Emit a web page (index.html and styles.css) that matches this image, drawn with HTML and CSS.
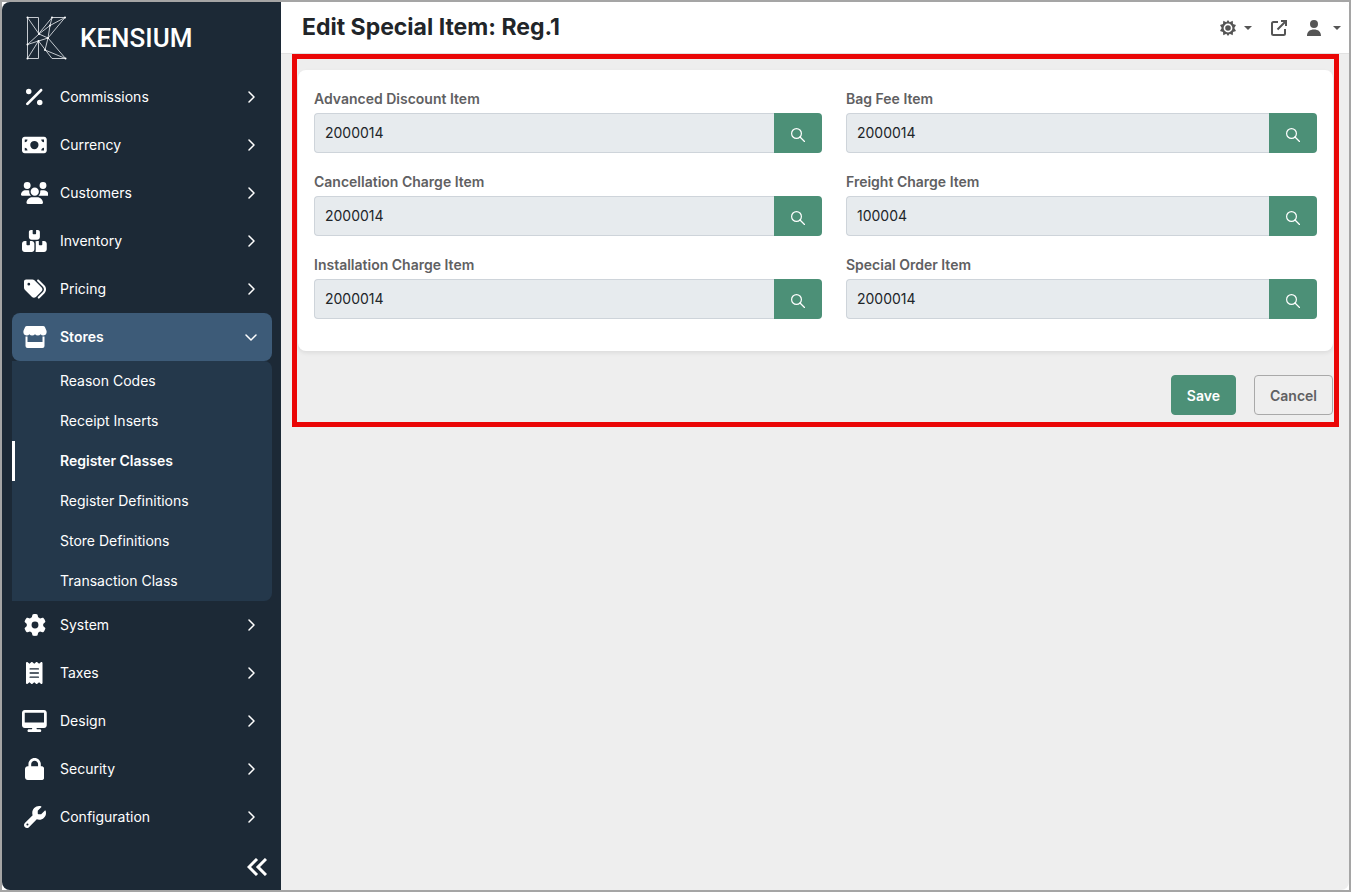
FILE: index.html
```html
<!DOCTYPE html>
<html lang="en">

<head>
  <meta charset="UTF-8">
  <meta name="viewport" content="width=device-width, initial-scale=1.0">
  <title>Edit Special Item</title>
  <link rel="stylesheet" href="styles.css">
</head>

<body>
  <div class="app">
    <aside class="sidebar">
      <a class="logo" href="#">
        <svg class="logo-mark" viewBox="26 16 41 44" aria-hidden="true">
          <path d="M27.5 17.5H38.5V34L52 17.5H65L48 38L65.5 58.5H52L38.5 41V58.5H27.5ZM27.5 17.5L39 34L48 38L27.5 44.5L39 34M52 17.5L50 25.5L65 17.5M50 25.5L39 34M50 25.5L48 38L45 50L65.5 58.5M38.5 41L27.5 58.5" />
          <g class="dots">
            <circle cx="27.5" cy="17.5" r="1" /><circle cx="52" cy="17.5" r="1" /><circle cx="65" cy="17.5" r="1" />
            <circle cx="50" cy="25.5" r="1" /><circle cx="39" cy="34" r="1" /><circle cx="48" cy="38" r="1" />
            <circle cx="38.5" cy="41" r="1" /><circle cx="27.5" cy="44.5" r="1" /><circle cx="45" cy="50" r="1" />
            <circle cx="27.5" cy="58.5" r="1" /><circle cx="65.5" cy="58.5" r="1" />
          </g>
        </svg>
        <span class="logo-text">KENSIUM</span>
      </a>

      <nav class="menu">
        <a class="menu-item" href="#">
          <span class="menu-icon"><svg viewBox="0 0 384 512"><path d="M374.6 118.6c12.5-12.5 12.5-32.8 0-45.3s-32.8-12.5-45.3 0l-320 320c-12.5 12.5-12.5 32.8 0 45.3s32.8 12.5 45.3 0l320-320zM128 128A64 64 0 1 0 0 128a64 64 0 1 0 128 0zM384 384a64 64 0 1 0 -128 0 64 64 0 1 0 128 0z" /></svg></span>
          <span>Commissions</span>
          <svg class="arrow" viewBox="0 0 12 12"><path d="M4 1l5 5-5 5" /></svg>
        </a>
        <a class="menu-item" href="#">
          <span class="menu-icon"><svg viewBox="0 0 576 512"><path d="M64 64C28.7 64 0 92.7 0 128V384c0 35.3 28.7 64 64 64H512c35.3 0 64-28.7 64-64V128c0-35.3-28.7-64-64-64H64zm64 320H64V320c35.3 0 64 28.7 64 64zM64 192V128h64c0 35.3-28.7 64-64 64zM448 384c0-35.3 28.7-64 64-64v64H448zm64-192c-35.3 0-64-28.7-64-64h64v64zM288 160a96 96 0 1 1 0 192 96 96 0 1 1 0-192z" /></svg></span>
          <span>Currency</span>
          <svg class="arrow" viewBox="0 0 12 12"><path d="M4 1l5 5-5 5" /></svg>
        </a>
        <a class="menu-item" href="#">
          <span class="menu-icon"><svg viewBox="0 0 640 512"><path d="M144 0a80 80 0 1 1 0 160A80 80 0 1 1 144 0zM512 0a80 80 0 1 1 0 160A80 80 0 1 1 512 0zM0 298.7C0 239.8 47.8 192 106.7 192h42.7c15.9 0 31 3.5 44.6 9.7c-1.3 7.2-1.9 14.7-1.9 22.3c0 38.2 16.8 72.5 43.3 96c-.2 0-.4 0-.7 0H21.3C9.6 320 0 310.4 0 298.7zM405.3 320c-.2 0-.4 0-.7 0c26.6-23.5 43.3-57.8 43.3-96c0-7.6-.7-15-1.9-22.3c13.6-6.3 28.7-9.7 44.6-9.7h42.7C592.2 192 640 239.8 640 298.7c0 11.8-9.6 21.3-21.3 21.3H405.3zM224 224a96 96 0 1 1 192 0 96 96 0 1 1 -192 0zM128 485.3C128 411.7 187.7 352 261.3 352H378.7C452.3 352 512 411.7 512 485.3c0 14.7-11.9 26.7-26.7 26.7H154.7c-14.7 0-26.7-11.9-26.7-26.7z" /></svg></span>
          <span>Customers</span>
          <svg class="arrow" viewBox="0 0 12 12"><path d="M4 1l5 5-5 5" /></svg>
        </a>
        <a class="menu-item" href="#">
          <span class="menu-icon"><svg viewBox="0 0 576 512"><path d="M248 0H208C181 0 160 21 160 48V160c0 35 29 64 64 64H352c35 0 64-29 64-64V48C416 21 395 0 368 0H328V80c0 9-7 16-16 16H264c-9 0-16-7-16-16V0zM64 256c-35 0-64 29-64 64V448c0 35 29 64 64 64H224c35 0 64-29 64-64V320c0-35-29-64-64-64H184v80c0 9-7 16-16 16H120c-9 0-16-7-16-16V256H64zM352 512H512c35 0 64-29 64-64V320c0-35-29-64-64-64H472v80c0 9-7 16-16 16H408c-9 0-16-7-16-16V256H352c-15 0-29 5-40 14c5 10 8 22 8 34V464c0 12-3 24-8 34C323 507 337 512 352 512z" /></svg></span>
          <span>Inventory</span>
          <svg class="arrow" viewBox="0 0 12 12"><path d="M4 1l5 5-5 5" /></svg>
        </a>
        <a class="menu-item" href="#">
          <span class="menu-icon"><svg viewBox="0 0 512 512"><path d="M345 39.1L472.8 168.4c52.4 53 52.4 138.2 0 191.2L360.8 472.9c-9.3 9.4-24.5 9.5-33.9 .2s-9.5-24.5-.2-33.9L438.6 325.9c33.9-34.3 33.9-89.4 0-123.7L310.9 72.9c-9.3-9.4-9.2-24.6 .2-33.9s24.6-9.2 33.9 .2zM0 229.5V80C0 53.5 21.5 32 48 32H197.5c17 0 33.3 6.7 45.3 18.7l168 168c25 25 25 65.5 0 90.5L277.3 442.7c-25 25-65.5 25-90.5 0l-168-168C6.7 262.7 0 246.5 0 229.5zM144 144a32 32 0 1 0 -64 0 32 32 0 1 0 64 0z" /></svg></span>
          <span>Pricing</span>
          <svg class="arrow" viewBox="0 0 12 12"><path d="M4 1l5 5-5 5" /></svg>
        </a>
        <a class="menu-item active" href="#">
          <span class="menu-icon"><svg viewBox="0 0 24 22"><path d="M4 0H20Q21.5 0 22 1.2L23.6 5Q24 9 20.5 9.5Q18.5 9.6 17.7 8.3Q16.5 9.5 14.9 9.5Q13.2 9.5 12 8.3Q10.8 9.5 9.1 9.5Q7.5 9.5 6.3 8.3Q5.5 9.6 3.5 9.5Q0 9 .4 5L2 1.2Q2.5 0 4 0ZM2.5 10.5H4.5V16H19.5V10.5H21.5V20Q21.5 22 19.5 22H4.5Q2.5 22 2.5 20Z" /></svg></span>
          <span>Stores</span>
          <svg class="arrow" viewBox="0 0 12 12"><path d="M1 4l5 5 5-5" /></svg>
        </a>
        <div class="submenu">
          <a href="#">Reason Codes</a>
          <a href="#">Receipt Inserts</a>
          <a class="current" href="#">Register Classes</a>
          <a href="#">Register Definitions</a>
          <a href="#">Store Definitions</a>
          <a href="#">Transaction Class</a>
        </div>
        <a class="menu-item" href="#">
          <span class="menu-icon"><svg viewBox="0 0 512 512"><path d="M495.9 166.6c3.2 8.7 .5 18.4-6.4 24.6l-43.3 39.4c1.1 8.3 1.7 16.8 1.7 25.4s-.6 17.1-1.7 25.4l43.3 39.4c6.9 6.2 9.6 15.9 6.4 24.6c-4.4 11.9-9.7 23.3-15.8 34.3l-4.7 8.1c-6.6 11-14 21.4-22.1 31.2c-5.9 7.2-15.7 9.6-24.5 6.8l-55.7-17.7c-13.4 10.3-28.2 18.9-44 25.4l-12.5 57.1c-2 9.1-9 16.3-18.2 17.8c-13.8 2.3-28 3.5-42.5 3.5s-28.7-1.2-42.5-3.5c-9.2-1.5-16.2-8.7-18.2-17.8l-12.5-57.1c-15.8-6.5-30.6-15.1-44-25.4L83.1 425.9c-8.8 2.8-18.6 .3-24.5-6.8c-8.1-9.8-15.5-20.2-22.1-31.2l-4.7-8.1c-6.1-11-11.4-22.4-15.8-34.3c-3.2-8.7-.5-18.4 6.4-24.6l43.3-39.4C64.6 273.1 64 264.6 64 256s.6-17.1 1.7-25.4L22.4 191.2c-6.9-6.2-9.6-15.9-6.4-24.6c4.4-11.9 9.7-23.3 15.8-34.3l4.7-8.1c6.6-11 14-21.4 22.1-31.2c5.9-7.2 15.7-9.6 24.5-6.8l55.7 17.7c13.4-10.3 28.2-18.9 44-25.4l12.5-57.1c2-9.1 9-16.3 18.2-17.8C227.3 1.2 241.5 0 256 0s28.7 1.2 42.5 3.5c9.2 1.5 16.2 8.7 18.2 17.8l12.5 57.1c15.8 6.5 30.6 15.1 44 25.4l55.7-17.7c8.8-2.8 18.6-.3 24.5 6.8c8.1 9.8 15.5 20.2 22.1 31.2l4.7 8.1c6.1 11 11.4 22.4 15.8 34.3zM256 336a80 80 0 1 0 0-160 80 80 0 1 0 0 160z" /></svg></span>
          <span>System</span>
          <svg class="arrow" viewBox="0 0 12 12"><path d="M4 1l5 5-5 5" /></svg>
        </a>
        <a class="menu-item" href="#">
          <span class="menu-icon"><svg viewBox="0 0 384 512"><path d="M14 2.2C22.5-1.7 32.5-.3 39.6 5.8L80 40.4 120.4 5.8c9-7.7 22.3-7.7 31.2 0L192 40.4 232.4 5.8c9-7.7 22.3-7.7 31.2 0L304 40.4 344.4 5.8c7.1-6.1 17.1-7.5 25.6-3.6s14 12.4 14 21.8V488c0 9.4-5.5 17.9-14 21.8s-18.5 2.5-25.6-3.6L304 471.6l-40.4 34.6c-9 7.7-22.3 7.7-31.2 0L192 471.6l-40.4 34.6c-9 7.7-22.3 7.7-31.2 0L80 471.6 39.6 506.2c-7.1 6.1-17.1 7.5-25.6 3.6S0 497.4 0 488V24C0 14.6 5.5 6.1 14 2.2zM96 144c-8.8 0-16 7.2-16 16s7.2 16 16 16H288c8.8 0 16-7.2 16-16s-7.2-16-16-16H96zM80 352c0 8.8 7.2 16 16 16H288c8.8 0 16-7.2 16-16s-7.2-16-16-16H96c-8.8 0-16 7.2-16 16zM96 240c-8.8 0-16 7.2-16 16s7.2 16 16 16H288c8.8 0 16-7.2 16-16s-7.2-16-16-16H96z" /></svg></span>
          <span>Taxes</span>
          <svg class="arrow" viewBox="0 0 12 12"><path d="M4 1l5 5-5 5" /></svg>
        </a>
        <a class="menu-item" href="#">
          <span class="menu-icon"><svg viewBox="0 0 576 512"><path d="M64 0C28.7 0 0 28.7 0 64V352c0 35.3 28.7 64 64 64H240l-10.7 32H160c-17.7 0-32 14.3-32 32s14.3 32 32 32H416c17.7 0 32-14.3 32-32s-14.3-32-32-32H346.7L336 416H512c35.3 0 64-28.7 64-64V64c0-35.3-28.7-64-64-64H64zM512 64V288H64V64H512z" /></svg></span>
          <span>Design</span>
          <svg class="arrow" viewBox="0 0 12 12"><path d="M4 1l5 5-5 5" /></svg>
        </a>
        <a class="menu-item" href="#">
          <span class="menu-icon"><svg viewBox="0 0 448 512"><path d="M144 144v48H304V144c0-44.2-35.8-80-80-80s-80 35.8-80 80zM80 192V144C80 64.5 144.5 0 224 0s144 64.5 144 144v48h16c35.3 0 64 28.7 64 64V448c0 35.3-28.7 64-64 64H64c-35.3 0-64-28.7-64-64V256c0-35.3 28.7-64 64-64H80z" /></svg></span>
          <span>Security</span>
          <svg class="arrow" viewBox="0 0 12 12"><path d="M4 1l5 5-5 5" /></svg>
        </a>
        <a class="menu-item" href="#">
          <span class="menu-icon"><svg viewBox="0 0 512 512"><path d="M352 320c88.4 0 160-71.6 160-160c0-15.3-2.2-30.1-6.2-44.2c-3.1-10.8-16.4-13.2-24.3-5.3l-76.8 76.8c-3 3-7.1 4.7-11.3 4.7H336c-8.8 0-16-7.2-16-16V118.6c0-4.2 1.7-8.3 4.7-11.3l76.8-76.8c7.9-7.9 5.4-21.2-5.3-24.3C382.1 2.2 367.3 0 352 0C263.6 0 192 71.6 192 160c0 19.1 3.4 37.5 9.5 54.5L19.9 396.1C7.2 408.8 0 426.1 0 444.1C0 481.6 30.4 512 67.9 512c18 0 35.3-7.2 48-19.9L297.5 310.5c17 6.2 35.4 9.5 54.5 9.5zM80 408a24 24 0 1 1 0 48 24 24 0 1 1 0-48z" /></svg></span>
          <span>Configuration</span>
          <svg class="arrow" viewBox="0 0 12 12"><path d="M4 1l5 5-5 5" /></svg>
        </a>
      </nav>

      <button class="collapse" type="button" aria-label="Collapse menu">
        <svg viewBox="0 0 20 18"><path d="M10 1L2 9l8 8M19 1l-8 8 8 8" /></svg>
      </button>
    </aside>

    <main class="content">
      <header class="topbar">
        <h1>Edit Special Item: Reg.1</h1>
        <div class="tools">
          <button class="tool" type="button" aria-label="Theme">
            <svg class="tool-icon" viewBox="0 0 16 16"><path fill-rule="evenodd" d="M8 0L9.7 2.2L12.7 .8L13 4L16 5L14.3 8L16 11L13 12L12.7 15.200L9.7 13.800L8 16L6.300 13.800L3.300 15.200L3 12L0 11L1.700 8L0 5L3 4L3.300 .8L6.300 2.200ZM8 3.600A4.400 4.400 0 1 0 8 12.400A4.400 4.400 0 1 0 8 3.600ZM8 5.200A2.800 2.800 0 1 1 8 10.800A2.800 2.800 0 1 1 8 5.200Z" /></svg>
            <svg class="caret" viewBox="0 0 8 4"><path d="M0 0h8L4 4z" /></svg>
          </button>
          <a class="tool" href="#" aria-label="Open in new window">
            <svg class="tool-icon open" viewBox="0 0 16 16"><path d="M7 2H2.500Q1 2 1 3.500V13.500Q1 15 2.500 15H12.500Q14 15 14 13.500V9M10 1H15V6M15 1L6.500 9.500" /></svg>
          </a>
          <button class="tool account" type="button" aria-label="Account">
            <svg class="tool-icon" viewBox="0 0 16 16"><path d="M8 0a4 4 0 1 1 0 8a4 4 0 1 1 0-8zM1 16C1 11.500 4 9.500 8 9.500S15 11.500 15 16Z" /></svg>
            <svg class="caret" viewBox="0 0 8 4"><path d="M0 0h8L4 4z" /></svg>
          </button>
        </div>
      </header>

      <form class="edit-form">
        <div class="card">
          <div class="field">
            <label for="discount">Advanced Discount Item</label>
            <div class="input-group">
              <input type="text" id="discount" value="2000014" readonly>
              <button type="button" aria-label="Search"><svg viewBox="0 0 14 14"><circle cx="5.5" cy="5.5" r="4.9" /><path d="M9 9l4.5 4.5" /></svg></button>
            </div>
          </div>
          <div class="field">
            <label for="bag">Bag Fee Item</label>
            <div class="input-group">
              <input type="text" id="bag" value="2000014" readonly>
              <button type="button" aria-label="Search"><svg viewBox="0 0 14 14"><circle cx="5.5" cy="5.5" r="4.9" /><path d="M9 9l4.5 4.5" /></svg></button>
            </div>
          </div>
          <div class="field">
            <label for="cancellation">Cancellation Charge Item</label>
            <div class="input-group">
              <input type="text" id="cancellation" value="2000014" readonly>
              <button type="button" aria-label="Search"><svg viewBox="0 0 14 14"><circle cx="5.5" cy="5.5" r="4.9" /><path d="M9 9l4.5 4.5" /></svg></button>
            </div>
          </div>
          <div class="field">
            <label for="freight">Freight Charge Item</label>
            <div class="input-group">
              <input type="text" id="freight" value="100004" readonly>
              <button type="button" aria-label="Search"><svg viewBox="0 0 14 14"><circle cx="5.5" cy="5.5" r="4.9" /><path d="M9 9l4.5 4.5" /></svg></button>
            </div>
          </div>
          <div class="field">
            <label for="installation">Installation Charge Item</label>
            <div class="input-group">
              <input type="text" id="installation" value="2000014" readonly>
              <button type="button" aria-label="Search"><svg viewBox="0 0 14 14"><circle cx="5.5" cy="5.5" r="4.9" /><path d="M9 9l4.5 4.5" /></svg></button>
            </div>
          </div>
          <div class="field">
            <label for="order">Special Order Item</label>
            <div class="input-group">
              <input type="text" id="order" value="2000014" readonly>
              <button type="button" aria-label="Search"><svg viewBox="0 0 14 14"><circle cx="5.5" cy="5.5" r="4.9" /><path d="M9 9l4.5 4.5" /></svg></button>
            </div>
          </div>
        </div>
        <div class="actions">
          <button class="btn save" type="submit">Save</button>
          <button class="btn cancel" type="button">Cancel</button>
        </div>
      </form>
    </main>
  </div>
</body>

</html>
```
FILE: styles.css
```css
* {
  box-sizing: border-box;
}

body {
  margin: 0;
  font-family: Inter, sans-serif;
  font-size: 14px;
  line-height: 20px;
  color: #212529;
  background-color: white;
  border: 2px solid #a5a5a5;
}

button,
input {
  font-family: inherit;
  font-size: 14px;
}

a {
  color: inherit;
  text-decoration: none;
}

.app {
  display: flex;
  min-height: calc(100vh - 4px);
  border-radius: 8px;
  overflow: hidden;
  background-color: #eee;
}

/* Sidebar */
.sidebar {
  display: flex;
  flex-direction: column;
  flex: 0 0 279px;
  padding: 0 9px 12px 10px;
  background-color: #1c2936;
  color: white;
}

.logo {
  display: flex;
  align-items: center;
  gap: 13px;
  height: 71px;
  padding: 0 0 0 14px;
}

.logo-mark {
  width: 41px;
  height: 44px;
  fill: none;
  stroke: #c5cad0;
  stroke-width: 1;
}

.logo-mark .dots {
  fill: white;
  stroke: none;
}

.logo-text {
  font-family: Roboto, sans-serif;
  font-size: 26px;
  line-height: 32px;
  font-weight: 500;
}

.menu-item {
  display: flex;
  align-items: center;
  height: 48px;
  padding: 0 15px 0 8px;
  border-radius: 8px;
}

.menu-item.active {
  background-color: #3d5b78;
  font-weight: 600;
}

.menu-icon {
  display: flex;
  justify-content: center;
  width: 29px;
  margin-right: 11px;
}

.menu-icon svg {
  height: 22px;
  fill: white;
}

.arrow {
  width: 12px;
  height: 12px;
  margin-left: auto;
  fill: none;
  stroke: white;
  stroke-width: 1.5;
  stroke-linecap: round;
  stroke-linejoin: round;
}

.submenu {
  background-color: #24384b;
  border-radius: 0 8px 8px 0;
}

.submenu a {
  display: flex;
  align-items: center;
  height: 40px;
  padding-left: 45px;
  border-left: 3px solid transparent;
}

.submenu .current {
  border-left-color: white;
  font-weight: 600;
}

.collapse {
  align-self: flex-end;
  display: flex;
  margin-top: auto;
  padding: 2px 5px;
  border: none;
  background: none;
  cursor: pointer;
}

.collapse svg {
  width: 20px;
  height: 18px;
  fill: none;
  stroke: white;
  stroke-width: 3;
}

/* Header */
.content {
  flex: 1;
  min-width: 0;
}

.topbar {
  display: flex;
  align-items: center;
  justify-content: space-between;
  height: 52px;
  padding: 0 8px 0 21px;
  background-color: white;
  border-bottom: 1px solid #e2e2e2;
}

h1 {
  margin: 0;
  padding-bottom: 2px;
  font-size: 23px;
  line-height: 32px;
  font-weight: 700;
}

.tools {
  display: flex;
  gap: 19px;
}

.tool {
  display: flex;
  align-items: center;
  gap: 8px;
  padding: 0;
  border: none;
  background: none;
  cursor: pointer;
}

.tool.account {
  gap: 11px;
}

.tool-icon {
  width: 16px;
  height: 16px;
  fill: #555;
}

.tool-icon.open {
  fill: none;
  stroke: #555;
  stroke-width: 2;
}

.caret {
  width: 8px;
  height: 4px;
  fill: #555;
}

/* Form */
.edit-form {
  margin: 0 10px 0 11px;
  padding: 11px 1px 7px;
  border: 5px solid #ea0606;
}

.card {
  display: grid;
  grid-template-columns: 508fr 471fr;
  gap: 19px 24px;
  padding: 19px 16px 32px;
  background-color: white;
  border-radius: 8px;
  box-shadow: 0 2px 4px rgba(0, 0, 0, 0.08);
}

.field label {
  display: block;
  margin-bottom: 4px;
  font-weight: 600;
  color: #5f6062;
}

.input-group {
  display: flex;
}

.input-group input {
  flex: 1;
  min-width: 0;
  height: 40px;
  padding: 0 10px 2px;
  border: 1px solid #ced4da;
  border-right: none;
  border-radius: 4px 0 0 4px;
  background-color: #e7ebee;
  color: #212529;
}

.input-group button {
  display: flex;
  align-items: center;
  justify-content: center;
  width: 48px;
  padding: 4px 0 0;
  border: none;
  border-radius: 0 4px 4px 0;
  background-color: #4c9077;
  cursor: pointer;
}

.input-group svg {
  width: 14px;
  height: 14px;
  fill: none;
  stroke: white;
  stroke-width: 1.2;
  stroke-linecap: round;
}

.actions {
  display: flex;
  justify-content: flex-end;
  gap: 18px;
  margin-top: 24px;
}

.btn {
  height: 40px;
  padding: 0 15px;
  border: 1px solid #4c9077;
  border-radius: 4px;
  font-weight: 600;
  cursor: pointer;
}

.save {
  background-color: #4c9077;
  color: white;
}

.cancel {
  background: none;
  border-color: #a9a9a9;
  color: #5f6062;
}
```
